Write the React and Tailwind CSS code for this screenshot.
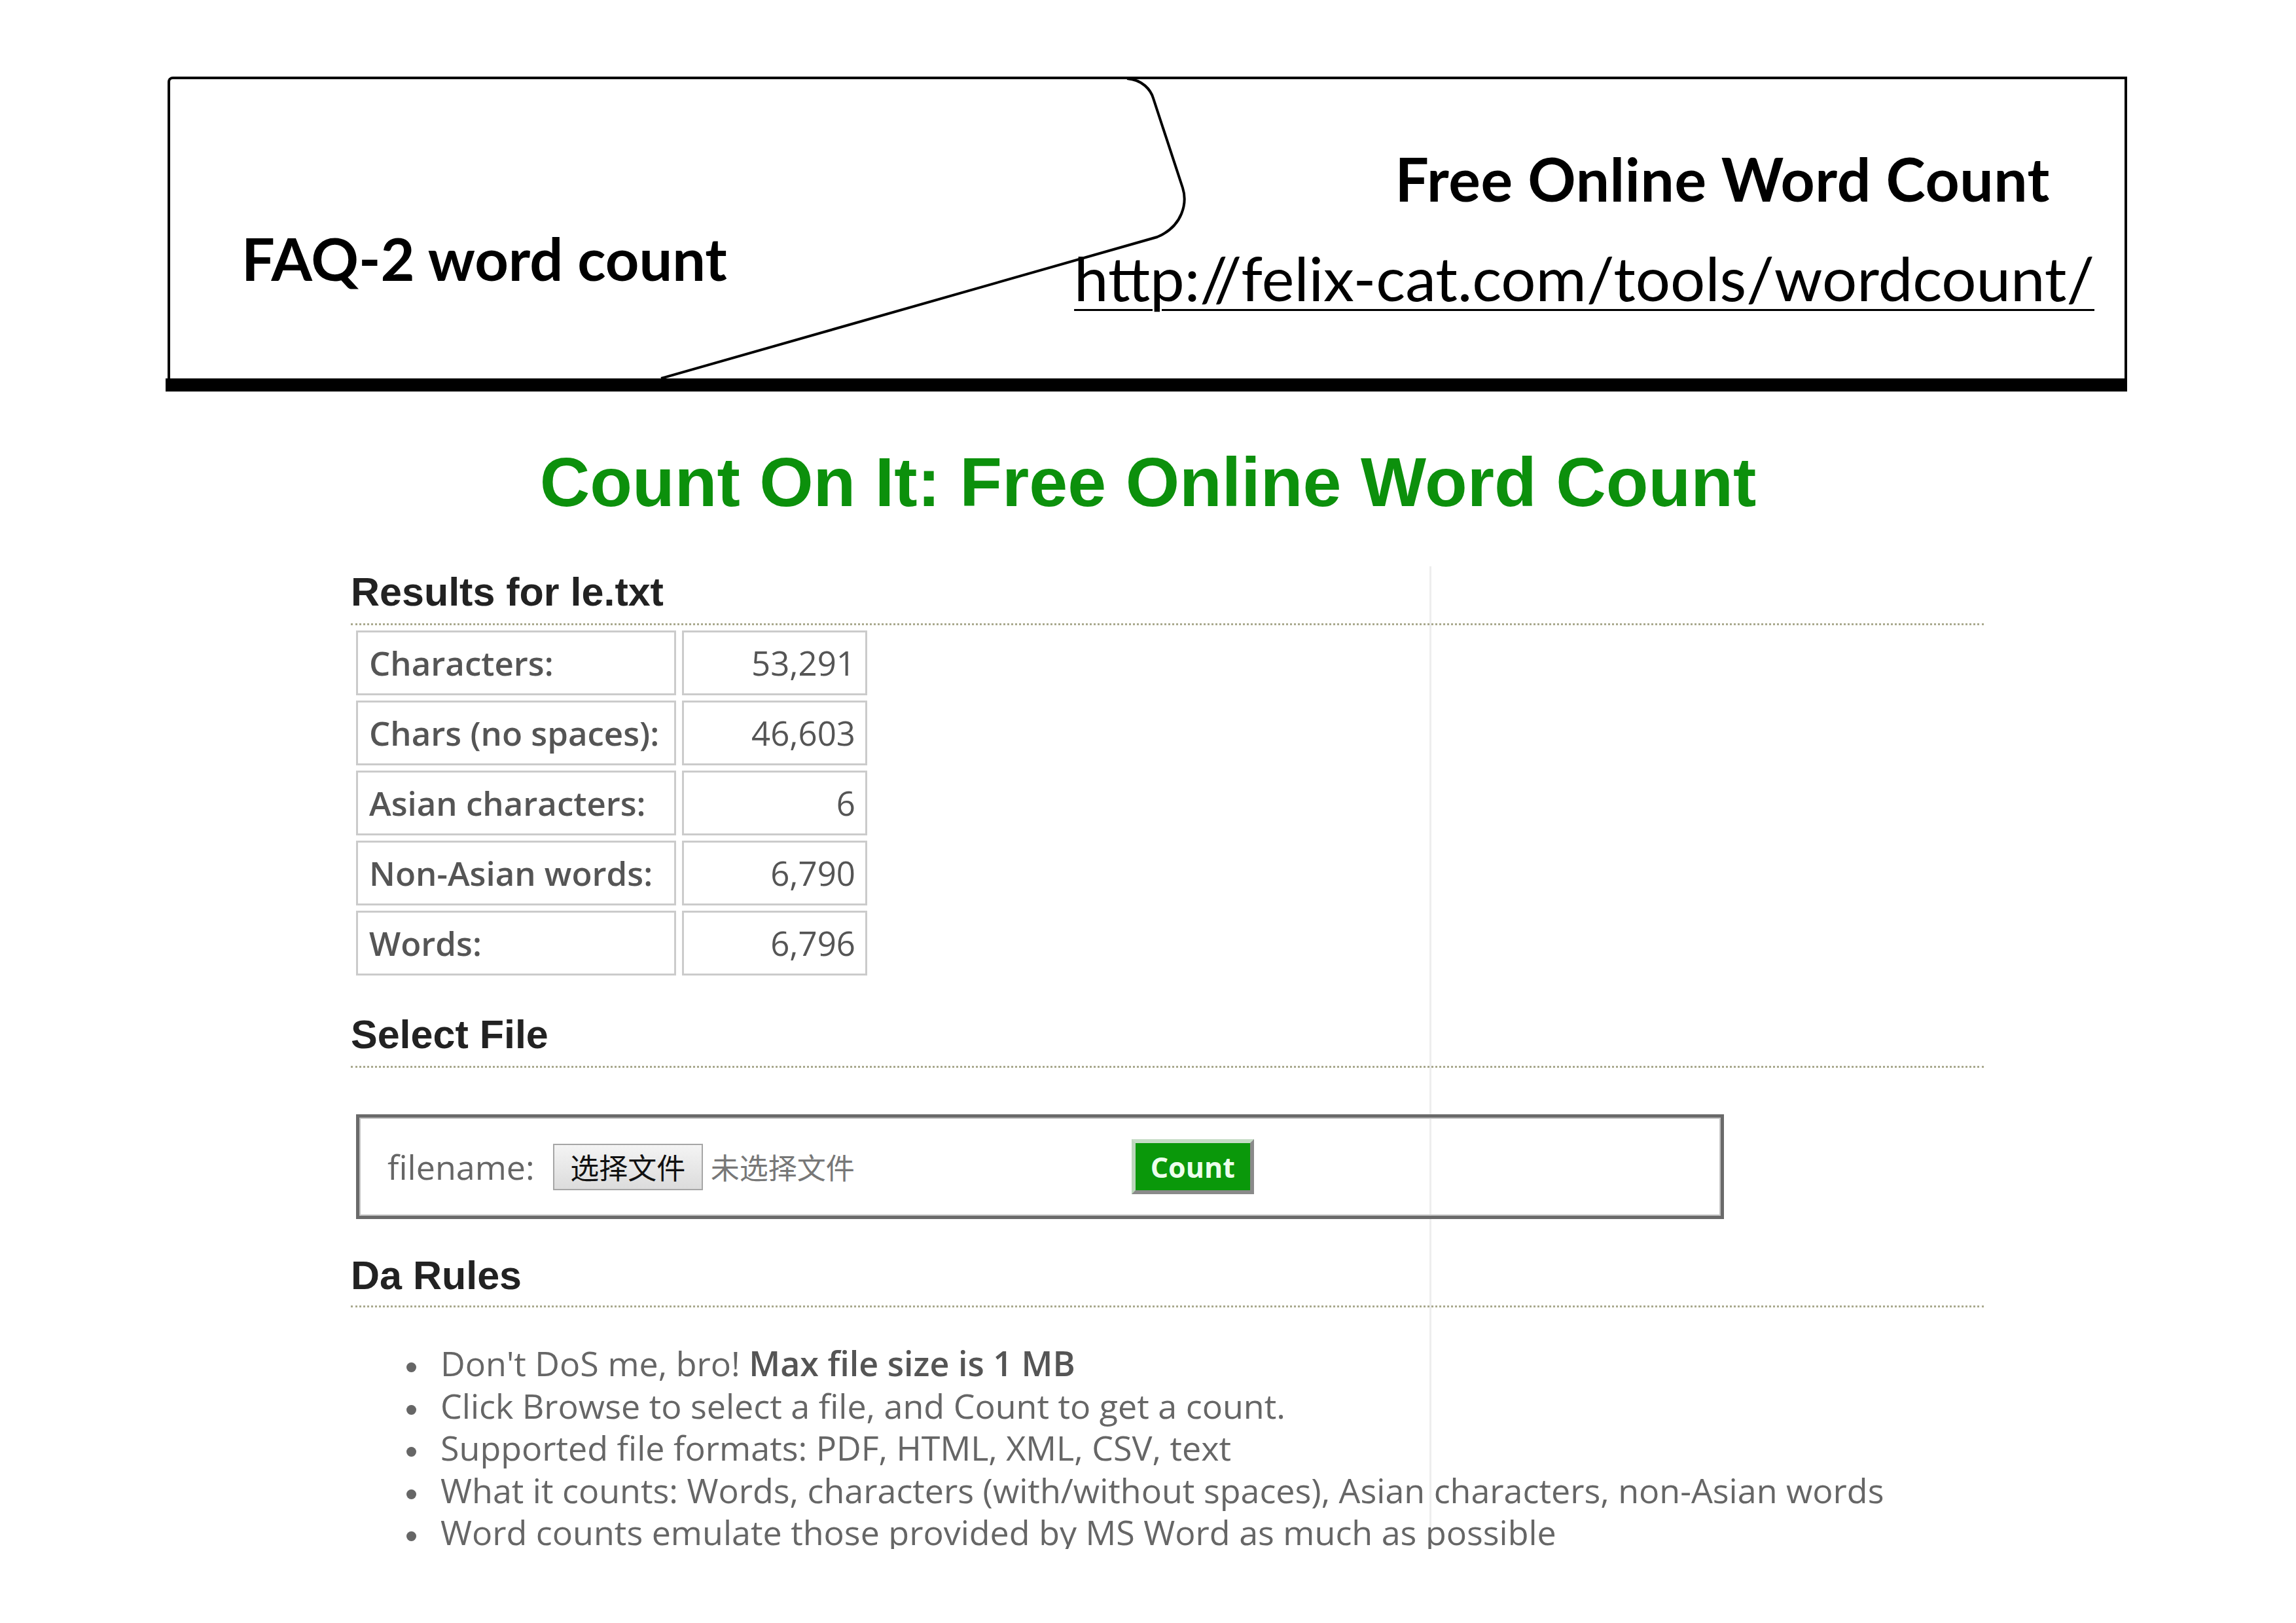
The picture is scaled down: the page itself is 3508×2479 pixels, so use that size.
const stats = [
  { label: 'Characters:', value: '53,291' },
  { label: 'Chars (no spaces):', value: '46,603' },
  { label: 'Asian characters:', value: '6' },
  { label: 'Non-Asian words:', value: '6,790' },
  { label: 'Words:', value: '6,796' },
]

const rules = [
  <>
    Don't DoS me, bro! <b className="font-semibold text-[#555]">Max file size is 1 MB</b>
  </>,
  'Click Browse to select a file, and Count to get a count.',
  'Supported file formats: PDF, HTML, XML, CSV, text',
  'What it counts: Words, characters (with/without spaces), Asian characters, non-Asian words',
  'Word counts emulate those provided by MS Word as much as possible',
]

function SectionHeading({ children }) {
  return (
    <h2 className="border-b-[3px] border-dotted border-[#a9a98e] pb-[17px] font-['Liberation_Sans',Arial,sans-serif] text-[61px] font-bold leading-none text-[#222]">
      {children}
    </h2>
  )
}

function SlideHeader() {
  return (
    <div className="pl-[256px] pt-[117px]">
      <div className="relative flex h-[461px] w-[2994px] justify-between rounded-tl-[8px] border-x-[4px] border-t-[4px] border-black font-['Lato',sans-serif] text-black">
        <svg
          className="pointer-events-none absolute -left-[4px] -top-[4px]"
          width="2994"
          height="465"
          viewBox="0 0 2994 465"
          aria-hidden="true"
        >
          <path
            d="M1466 3 C1490 5 1502 20 1506 33 L1551 170 C1558 192 1552 228 1512 245 L754 461"
            fill="none"
            stroke="#000"
            strokeWidth="4"
          />
        </svg>
        <div className="pl-[109px] pt-[228px]">
          <p className="text-[90px] font-bold leading-none">FAQ-2 word count</p>
        </div>
        <div className="flex flex-col items-end pt-[106px]">
          <p className="mr-[114px] text-[91px] font-bold leading-none tracking-[0.6px]">Free Online Word Count</p>
          <p className="mr-[46px] mt-[59px] text-[94px] leading-none underline decoration-[3px] underline-offset-[12px]">
            http://felix-cat.com/tools/wordcount/
          </p>
        </div>
      </div>
      <div className="-ml-[3px] h-[20px] w-[2997px] bg-black" />
    </div>
  )
}

function FileBox() {
  return (
    <div className="ml-[8px] mt-[71px] flex h-[160px] w-[2090px] items-center border-[5px] border-[#6a6a6a] pl-[43px] shadow-[inset_0_0_0_2px_#c4c4c4] font-['Open_Sans',sans-serif]">
      <span className="text-[52px] leading-none text-[#666]">filename:</span>
      <span className="ml-[28px] flex h-[71px] w-[229px] items-center justify-center border-[2px] border-[#a6a6a6] bg-gradient-to-b from-[#f4f4f4] to-[#dcdcdc] font-['Noto_Sans_CJK_SC',sans-serif] text-[44px] leading-none text-[#111]">
        选择文件
      </span>
      <span className="ml-[12px] font-['Noto_Sans_CJK_SC',sans-serif] text-[44px] leading-none text-[#777]">未选择文件</span>
      <span className="ml-[423px] flex h-[84px] w-[187px] items-center justify-center border-[6px] border-b-[#8a8a8a] border-l-[#bcd6bc] border-r-[#8a8a8a] border-t-[#c6dcc6] bg-[#0a980a] text-[43px] font-bold leading-none text-[#ecffec]">
        Count
      </span>
    </div>
  )
}

export default function App() {
  return (
    <div className="relative h-[2479px] w-[3508px] overflow-hidden bg-white">
      <SlideHeader />

      <div className="relative h-[1768px] overflow-hidden">
        <div className="absolute left-[2184px] top-[267px] h-[1600px] w-[3px] bg-[#eeeeee]" />

        <h1 className="mt-[85px] text-center font-['Liberation_Sans',Arial,sans-serif] text-[106px] font-bold leading-none text-[#0c900c]">
          Count On It: Free Online Word Count
        </h1>

        <div className="relative ml-[536px] w-[2495px]">
          <div className="mt-[85px]">
            <SectionHeading>Results for le.txt</SectionHeading>
          </div>

          <div className="grid w-fit grid-cols-[489px_283px] gap-x-[9px] gap-y-[8px] pl-[8px] pt-[8px] font-['Open_Sans',sans-serif] text-[51px] leading-none text-[#555]">
            {stats.map((row) => (
              <div key={row.label} className="contents">
                <div className="flex h-[99px] items-center border-[3px] border-[#cbcbcb] pl-[17px] font-semibold">
                  {row.label}
                </div>
                <div className="flex h-[99px] items-center justify-end border-[3px] border-[#cbcbcb] pr-[15px]">
                  {row.value}
                </div>
              </div>
            ))}
          </div>

          <div className="mt-[60px]">
            <SectionHeading>Select File</SectionHeading>
          </div>

          <FileBox />

          <div className="mt-[56px]">
            <div className="[&>h2]:pb-[15px]">
              <SectionHeading>Da Rules</SectionHeading>
            </div>
          </div>

          <ul className="mt-[53px] font-['Open_Sans',sans-serif] text-[52px] leading-[64.5px] text-[#666]">
            {rules.map((rule, i) => (
              <li key={i} className="flex items-start pl-[85px]">
                <span className="mr-[37px] mt-[31px] h-[15px] w-[15px] shrink-0 rounded-full bg-[#666]" />
                <span className="whitespace-nowrap">{rule}</span>
              </li>
            ))}
          </ul>
        </div>
      </div>
    </div>
  )
}
